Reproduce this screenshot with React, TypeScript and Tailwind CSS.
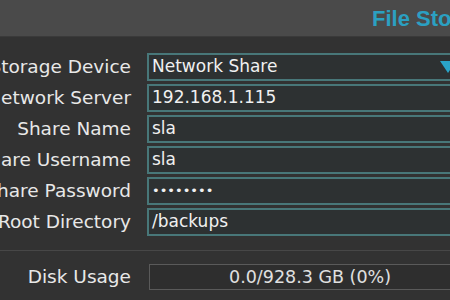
import { useState } from "react";

type Field = { label: string; value: string; select?: boolean; secret?: boolean };

const fields: Field[] = [
    { label: "Storage Device", value: "Network Share", select: true },
    { label: "Network Server", value: "192.168.1.115" },
    { label: "Share Name", value: "sla" },
    { label: "Share Username", value: "sla" },
    { label: "Share Password", value: "••••••••", secret: true },
    { label: "Root Directory", value: "/backups" },
];

export default function App() {
    const [values] = useState(fields);

    return (
        <div
            className="w-[450px] h-[300px] overflow-hidden bg-[#323232] text-[#e8e8e8]"
            style={{ fontFamily: '"DejaVu Sans", sans-serif' }}
        >
            {/* Header */}
            <div className="h-[37px] bg-[#4a4a4a] flex items-center border-b border-[#3a3a3a]">
                <div className="ml-[372px] w-[78px] overflow-hidden whitespace-nowrap">
                    <span className="text-[22px] font-bold text-[#2ba0c2] font-['Liberation_Sans',sans-serif]">File Storage</span>
                </div>
            </div>

            {/* Form */}
            <div className="pt-[16px] flex flex-col gap-[3px]">
                {values.map((f) => (
                    <div key={f.label} className="flex items-center h-[28px]">
                        <div className="w-[131px] shrink-0 flex justify-end whitespace-nowrap text-[18.5px]">
                            {f.label}
                        </div>
                        <div className="ml-[16px] w-[310px] shrink-0 h-[28px] border-2 border-[#487779] bg-[#2d3132] flex items-center px-[3px] relative">
                            <span
                                className={`text-[#f0f0f0] whitespace-nowrap ${f.secret ? "text-[13px]" : "text-[17px]"}`}
                            >
                                {f.value}
                            </span>
                            {f.select && (
                                <svg className="absolute left-[291px] top-[6px]" width="16" height="12" viewBox="0 0 16 12">
                                    <polygon points="0,0 16,0 8,12" fill="#2aa4c8" />
                                </svg>
                            )}
                        </div>
                    </div>
                ))}
            </div>

            {/* Divider */}
            <div className="mt-[14px] h-px bg-[#474747]" />

            {/* Disk usage */}
            <div className="mt-[13px] flex items-center h-[26px]">
                <div className="w-[131px] shrink-0 flex justify-end whitespace-nowrap text-[18.5px]">Disk Usage</div>
                <div className="ml-[18px] w-[322px] shrink-0 h-[26px] border border-[#5a5a5a] bg-[#2e2e2e] flex items-center justify-center">
                    <span className="text-[17.5px] text-[#e0e0e0]">0.0/928.3 GB (0%)</span>
                </div>
            </div>
        </div>
    );
}
